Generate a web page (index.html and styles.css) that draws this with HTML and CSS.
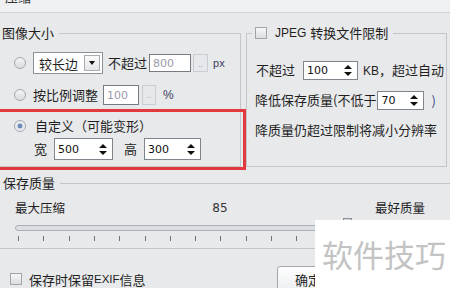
FILE: index.html
```html
<!DOCTYPE html>
<html>
<head>
  <meta charset="utf-8">
  <title>压缩</title>
  <link rel="stylesheet" href="styles.css">
</head>
<body>
  <div class="titlebar"><span>压缩</span></div>

  <div class="top">
    <div class="group size">
      <div class="legend">图像大小</div>

      <div class="row r1">
        <span class="radio"></span>
        <div class="combo">
          <span>较长边</span>
          <span class="combo-btn"><i></i></span>
        </div>
        <span class="lbl gap5">不超过</span>
        <span class="field off w42">800</span>
        <span class="dots w15">..</span>
        <span class="unit">px</span>
      </div>

      <div class="row r2">
        <span class="radio"></span>
        <span class="lbl gap7">按比例调整</span>
        <span class="field off w36">100</span>
        <span class="dots w14">..</span>
        <span class="unit pct">%</span>
      </div>

      <div class="row r3">
        <span class="radio on"></span>
        <span class="lbl gap8">自定义（可能变形）</span>
      </div>

      <div class="row r4">
        <span class="lbl">宽</span>
        <span class="field spin w59">500<b class="arrows"></b></span>
        <span class="lbl gap11">高</span>
        <span class="field spin w57">300<b class="arrows"></b></span>
      </div>
    </div>

    <div class="group jpeg">
      <div class="legend"><span class="check"></span><span class="lat">JPEG</span> 转换文件限制</div>

      <div class="row j1">
        <span class="lbl">不超过</span>
        <span class="field spin w55">100<b class="arrows"></b></span>
        <span class="lbl gap5"><span class="lat">KB</span>，超过自动</span>
      </div>

      <div class="row j2">
        <span class="lbl">降低保存质量(不低于</span>
        <span class="field spin w47">70<b class="arrows"></b></span>
        <span class="paren">)</span>
      </div>

      <div class="row j3">
        <span class="lbl">降质量仍超过限制将减小分辨率</span>
      </div>
    </div>
  </div>

  <div class="group quality">
    <div class="legend">保存质量</div>
    <div class="scale">
      <span>最大压缩</span>
      <span class="num">85</span>
      <span>最好质量</span>
    </div>
    <div class="track"></div>
    <div class="ticks"></div>
    <span class="thumb"></span>
  </div>

  <div class="exif-row">
    <label class="exif"><span class="check"></span>保存时保留<span class="lat">EXIF</span>信息</label>
    <button class="ok">确定</button>
  </div>

  <div class="highlight"></div>
  <div class="mark">软件技巧</div>
</body>
</html>
```

FILE: styles.css
```css
body {
  margin: 0;
  width: 450px;
  height: 288px;
  overflow: hidden;
  position: relative;
  background: #e8e9eb;
  color: #1f1f1f;
  font-family: "Noto Sans CJK SC", sans-serif;
  font-size: 13px;
}
.titlebar {
  height: 12px;
  overflow: hidden;
  background: #eff0f2;
  border-bottom: 1px solid #cfd2d6;
}
.titlebar span {
  display: block;
  margin-top: -10px;
  padding-left: 5px;
  line-height: 13px;
  color: #333;
}
.lat {
  font-family: "Liberation Sans", sans-serif;
  font-size: 12px;
}

/* group boxes */
.top {
  display: flex;
  margin-top: 20px;
}
.group {
  box-sizing: border-box;
  border-top: 1px solid #c3c6ca;
  border-bottom: 1px solid #c3c6ca;
}
.legend {
  display: flex;
  align-items: center;
  width: max-content;
  height: 16px;
  margin-top: -9px;
  padding: 0 5px 0 2px;
  line-height: 16px;
  background: #e8e9eb;
  white-space: nowrap;
}
.size {
  width: 241px;
  height: 134px;
  border-right: 1px solid #c3c6ca;
}
.jpeg {
  width: 201px;
  height: 134px;
  margin-left: 5px;
  border-left: 1px solid #c3c6ca;
  border-right: 1px solid #c3c6ca;
}
.jpeg .legend {
  margin-left: 5px;
  padding-left: 3px;
}
.jpeg .legend .check {
  margin-right: 8px;
}
.jpeg .legend .lat {
  margin-right: 4px;
}

.row {
  display: flex;
  align-items: center;
}
.lbl {
  line-height: 16px;
  white-space: nowrap;
}
.r1 { height: 22px; margin-top: 11px; padding-left: 14px; }
.r2 { height: 22px; margin-top: 10px; padding-left: 14px; }
.r3 { height: 16px; margin-top: 12px; padding-left: 14px; }
.r4 { height: 22px; margin-top: 4px; padding-left: 34px; }
.r4 .spin { height: 22px; margin-left: 7px; }
.r4 .gap11 { margin-left: 11px; }
.j1 { height: 20px; margin-top: 19px; padding-left: 9px; }
.j1 .spin { margin-left: 8px; }
.j2 { height: 20px; margin-top: 10px; padding-left: 8px; }
.j2 .spin { margin-left: 1px; }
.j3 { height: 20px; margin-top: 10px; padding-left: 8px; }
.gap5 { margin-left: 5px; }
.gap7 { margin-left: 7px; }
.gap8 { margin-left: 9px; }

/* controls */
.radio {
  box-sizing: border-box;
  width: 12px;
  height: 12px;
  border-radius: 50%;
  border: 1px solid #a3a8ae;
  background: linear-gradient(#f4f5f6, #d9dbde);
  flex: none;
}
.radio.on {
  background: radial-gradient(circle, #6a88b3 0 2px, #c9d3e0 2.5px, #eef0f3 4px);
}
.check {
  display: inline-block;
  box-sizing: border-box;
  width: 12px;
  height: 12px;
  border: 1px solid #a0a5ab;
  background: linear-gradient(#f7f7f8, #dcdee1);
  flex: none;
}
.combo {
  box-sizing: border-box;
  display: flex;
  align-items: center;
  justify-content: space-between;
  width: 70px;
  height: 22px;
  margin-left: 7px;
  padding: 0 2px 0 5px;
  background: #fff;
  border: 1px solid #8c9197;
}
.combo-btn {
  box-sizing: border-box;
  display: flex;
  align-items: center;
  justify-content: center;
  width: 16px;
  height: 16px;
  border: 1px solid #a9adb2;
  background: linear-gradient(#fbfbfb, #e3e5e8);
}
.combo-btn i {
  width: 0;
  height: 0;
  border-left: 3.5px solid transparent;
  border-right: 3.5px solid transparent;
  border-top: 4px solid #111;
}
.field {
  box-sizing: border-box;
  display: flex;
  align-items: center;
  position: relative;
  height: 19px;
  padding-left: 3px;
  background: #fff;
  border: 1px solid #80868d;
  font-family: "DejaVu Sans", sans-serif;
  font-size: 11px;
  color: #111;
}
.field.off {
  color: #9a98a8;
  border-color: #767b82;
}
.r1 .field { height: 18px; margin-left: 2px; }
.r2 .field { height: 20px; margin-left: 5px; }
.w36 { width: 36px; }
.w42 { width: 42px; }
.w47 { width: 47px; }
.w55 { width: 55px; }
.w57 { width: 57px; }
.w59 { width: 59px; }
.dots {
  box-sizing: border-box;
  height: 18px;
  margin-left: 2px;
  border: 1px solid #c9ccd0;
  background: #e6e8eb;
  color: #b5b8bc;
  font-size: 9px;
  line-height: 18px;
  text-align: center;
}
.r2 .dots { height: 20px; margin-left: 3px; }
.w14 { width: 14px; }
.w15 { width: 15px; }
.unit {
  margin-left: 5px;
  font-family: "Liberation Sans", sans-serif;
  font-size: 11px;
  color: #3b4160;
}
.pct { margin-left: 7px; font-size: 12px; }
.arrows {
  position: absolute;
  right: 5px;
  top: 50%;
  width: 8px;
  height: 11px;
  margin-top: -5.5px;
}
.arrows::before,
.arrows::after {
  content: "";
  position: absolute;
  left: 0;
  border-left: 4px solid transparent;
  border-right: 4px solid transparent;
}
.arrows::before {
  top: 0;
  border-bottom: 4px solid #111;
}
.arrows::after {
  bottom: 0;
  border-top: 4px solid #111;
}
.paren {
  margin-left: 7px;
  color: #3b4a8a;
}

/* quality slider */
.quality {
  position: relative;
  height: 66px;
  margin-top: 16px;
}
.quality .legend {
  padding-left: 3px;
}
.scale {
  display: flex;
  justify-content: space-between;
  width: 410px;
  height: 18px;
  margin: 8px 0 0 15px;
  line-height: 18px;
  font-size: 12.5px;
}
.scale .num {
  font-family: "DejaVu Sans", sans-serif;
  font-size: 12px;
  color: #333;
}
.track {
  box-sizing: border-box;
  width: 440px;
  height: 6px;
  margin: 8px 0 0 15px;
  border: 1px solid #aab0b6;
  border-radius: 3px;
  background: #dcdfe2;
}
.ticks {
  height: 5px;
  margin: 5px 0 0 18px;
  background-image: repeating-linear-gradient(to right, #6f7378 0 1px, transparent 1px 25.3px);
}
.thumb {
  position: absolute;
  left: 343px;
  top: 34px;
  width: 9px;
  height: 14px;
  box-sizing: border-box;
  border: 1px solid #8b9096;
  background: #d2d5d9;
}

/* bottom row */
.exif-row {
  display: flex;
  align-items: center;
  height: 26px;
  margin-top: 17px;
  padding-left: 10px;
}
.exif {
  display: flex;
  align-items: center;
  width: 267px;
  white-space: nowrap;
}
.exif .check {
  margin-right: 7px;
}
.exif .lat {
  font-size: 11.5px;
}
.ok {
  width: 62px;
  height: 26px;
  padding: 0;
  border: 1px solid #a3a7ad;
  border-radius: 3px;
  background: linear-gradient(#fdfdfd, #eceef0);
  font-family: "Noto Sans CJK SC", sans-serif;
  font-size: 13px;
  color: #1f1f1f;
}

/* overlays */
.highlight {
  position: absolute;
  left: -4px;
  top: 109px;
  width: 250px;
  height: 61px;
  box-sizing: border-box;
  border: 3px solid #e2393f;
}
.mark {
  position: absolute;
  left: 315px;
  top: 220px;
  width: 135px;
  height: 68px;
  display: flex;
  align-items: center;
  padding-left: 7px;
  box-sizing: border-box;
  background: #fff;
  color: #c3c3c3;
  font-size: 31px;
  line-height: 34px;
  white-space: nowrap;
}
```
